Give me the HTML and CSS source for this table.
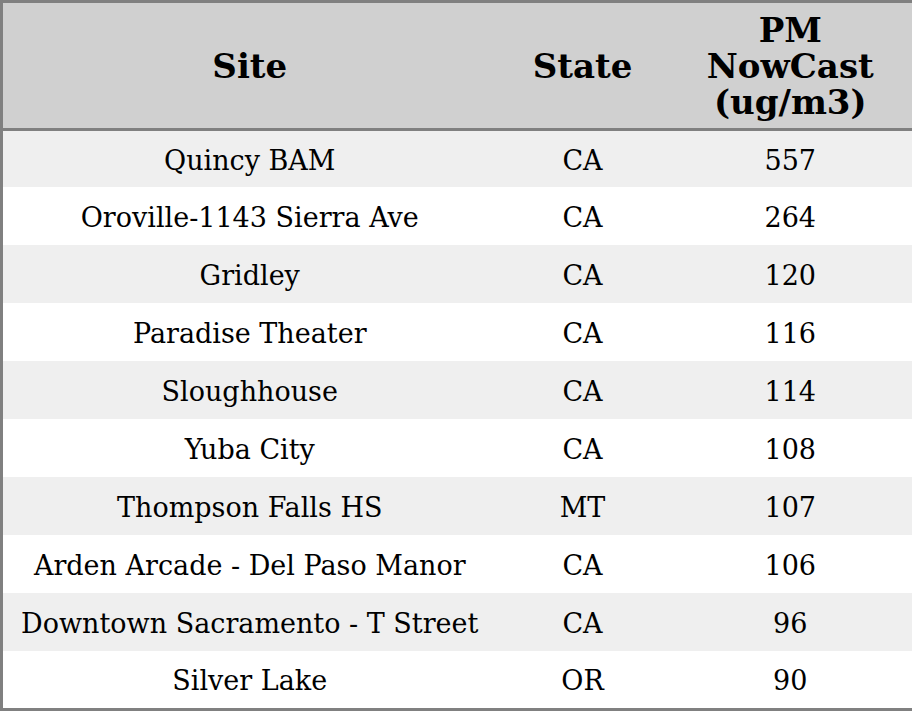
FILE: index.html
```html
<!DOCTYPE html>
<html>
<head>
<meta charset="utf-8">
<link rel="stylesheet" href="styles.css">
</head>
<body>
<table class="aq">
  <colgroup>
    <col class="c-site">
    <col class="c-state">
    <col class="c-pm">
  </colgroup>
  <thead>
    <tr><th>Site</th><th>State</th><th>PM<br>NowCast<br>(ug/m3)</th></tr>
  </thead>
  <tbody>
    <tr><td>Quincy BAM</td><td>CA</td><td>557</td></tr>
    <tr><td>Oroville-1143 Sierra Ave</td><td>CA</td><td>264</td></tr>
    <tr><td>Gridley</td><td>CA</td><td>120</td></tr>
    <tr><td>Paradise Theater</td><td>CA</td><td>116</td></tr>
    <tr><td>Sloughhouse</td><td>CA</td><td>114</td></tr>
    <tr><td>Yuba City</td><td>CA</td><td>108</td></tr>
    <tr><td>Thompson Falls HS</td><td>MT</td><td>107</td></tr>
    <tr><td>Arden Arcade - Del Paso Manor</td><td>CA</td><td>106</td></tr>
    <tr><td>Downtown Sacramento - T Street</td><td>CA</td><td>96</td></tr>
    <tr><td>Silver Lake</td><td>OR</td><td>90</td></tr>
  </tbody>
</table>
</body>
</html>
```
FILE: styles.css
```css
html, body {
  margin: 0;
  padding: 0;
  background: #ffffff;
}
.aq {
  width: 912px;
  border-collapse: collapse;
  table-layout: fixed;
  border: 3px solid #808080;
  font-family: "DejaVu Serif", serif;
  color: #000;
}
.c-site { width: 495px; }
.c-state { width: 172px; }
.c-pm { width: 245px; }
.aq th {
  background: #d0d0d0;
  font-size: 34px;
  font-weight: bold;
  line-height: 36px;
  height: 125px;
  padding: 0;
  text-align: center;
  vertical-align: middle;
  border-bottom: 3px solid #808080;
}
.aq td {
  font-size: 27px;
  text-align: center;
  vertical-align: middle;
  padding: 2px 0 0 0;
  height: 56px;
}
.aq tbody tr:first-child td {
  height: 54px;
  padding-top: 2px;
}
.aq tbody tr:last-child td {
  height: 55px;
}
.aq tbody tr:nth-child(odd) td {
  background: #efefef;
}
```
